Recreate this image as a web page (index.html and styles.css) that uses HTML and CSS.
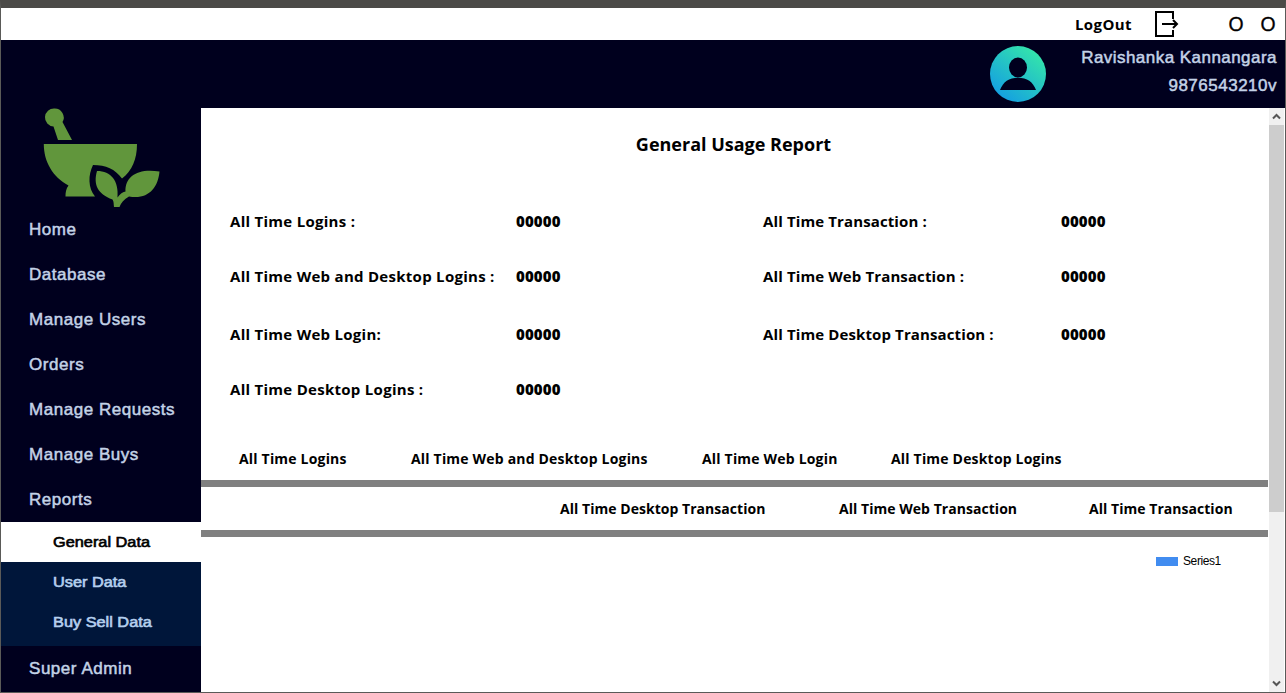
FILE: index.html
```html
<!DOCTYPE html>
<html lang="en">
<head>
<meta charset="utf-8">
<title>General Usage Report</title>
<link rel="stylesheet" href="styles.css">
</head>
<body>
<div class="window">
  <div class="titlebar">
    <span class="logout">LogOut</span>
    <svg class="logout-icon" width="26" height="28" viewBox="0 0 26 28" fill="none" stroke="#000" stroke-width="2"><path d="M19 9V2H2v24h17v-6"/><path d="M8 14h15M19 10l4 4-4 4"/></svg>
    <span class="win-btn">O</span>
    <span class="win-btn">O</span>
  </div>
  <header class="header">
    <svg class="avatar" width="56" height="56" viewBox="0 0 56 56"><defs><linearGradient id="g" x1="0.15" y1="0.9" x2="0.8" y2="0.1"><stop offset="0" stop-color="#149fe2"/><stop offset="1" stop-color="#33e3ac"/></linearGradient></defs><circle cx="28" cy="28" r="28" fill="url(#g)"/><ellipse cx="28" cy="21.5" rx="9" ry="10" fill="#00001e"/><path d="M10 44C13 36 19 31.800 28 31.800S43 36 46 44Z" fill="#00001e"/></svg>
    <div class="user"><span class="user-name">Ravishanka Kannangara</span><span class="user-id">9876543210v</span></div>
  </header>
  <div class="main">
    <nav class="sidebar">
      <svg class="logo" width="118" height="100" viewBox="0 0 118 100" fill="#61963c"><path d="M11.500 0.500a9 9 0 0 1 8 13.500L29 32H15L10.500 18.500A9 9 0 0 1 11.500 0.500Z"/><path d="M0.800 36H94C94 51 89 63 79 70.500C72 61 63 57 50 57C45 67 45 80 52 88.500H22.500C22.500 84 23 81 25.500 77.500C10 69 0.800 54 0.800 36Z"/><path d="M54 63C68 63 76 73 74.500 89.500C77 86 79 84.500 82.500 83.500C82 68 95 60 116.500 63.500C115 80 105 92 86 88.500C81 91 78 95 76.500 99H71C70.500 96 71 94 69.500 91.500C55 86 50 77 54 63Z"/></svg>
      <a class="item">Home</a>
      <a class="item">Database</a>
      <a class="item">Manage Users</a>
      <a class="item">Orders</a>
      <a class="item">Manage Requests</a>
      <a class="item">Manage Buys</a>
      <a class="item">Reports</a>
      <div class="submenu">
        <a class="sub active"><span>General Data</span></a>
        <a class="sub"><span>User Data</span></a>
        <a class="sub"><span>Buy Sell Data</span></a>
      </div>
      <a class="item">Super Admin</a>
    </nav>
    <main class="report">
      <h1>General Usage Report</h1>
      <div class="stats">
        <span class="login-label">All Time Logins :</span><b>00000</b><span>All Time Transaction :</span><b>00000</b>
        <span class="login-label">All Time Web and Desktop Logins :</span><b>00000</b><span>All Time Web Transaction :</span><b>00000</b>
        <span class="login-label">All Time Web Login:</span><b>00000</b><span>All Time Desktop Transaction :</span><b>00000</b>
        <span class="login-label">All Time Desktop Logins :</span><b>00000</b>
      </div>
      <div class="tabs tabs-logins"><span>All Time Logins</span><span>All Time Web and Desktop Logins</span><span>All Time Web Login</span><span>All Time Desktop Logins</span></div>
      <div class="tabs tabs-trans"><span>All Time Desktop Transaction</span><span>All Time Web Transaction</span><span>All Time Transaction</span></div>
      <div class="legend"><i class="swatch"></i><span>Series1</span></div>
    </main>
    <div class="scrollbar">
      <svg width="15" height="17" viewBox="0 0 15 17" fill="none" stroke="#555" stroke-width="2"><path d="M4 10.500l3.500-3.500 3.500 3.500"/></svg>
      <div class="thumb"></div>
      <svg class="down" width="15" height="17" viewBox="0 0 15 17" fill="none" stroke="#555" stroke-width="2"><path d="M4 6.500l3.500 3.500 3.500-3.500"/></svg>
    </div>
  </div>
</div>
</body>
</html>
```

FILE: styles.css
```css
* { box-sizing: border-box; }
body { margin: 0; font-family: "Open Sans", "Noto Sans", sans-serif; color: #000; }
.window { width: 1286px; height: 693px; border: 1px solid #5a5a58; border-top: 8px solid #4b4a47; background: #fff; display: flex; flex-direction: column; overflow: hidden; white-space: nowrap; }
.titlebar { height: 32px; flex: none; display: flex; align-items: center; justify-content: flex-end; padding-right: 9px; font-size: 15px; font-weight: 700; }
.logout { width: 57px; letter-spacing: .4px; }
.logout-icon { margin: 0 48px 0 22px; }
.win-btn { width: 16px; font-size: 20px; font-weight: 400; text-align: center; line-height: 32px; -webkit-text-stroke: .4px #000; }
.win-btn + .win-btn { margin-left: 16px; }
.header { height: 68px; flex: none; background: #00001e; display: flex; justify-content: flex-end; padding: 6px 8px 0 0; font-family: "Liberation Sans", Arial, sans-serif; color: #c3d2e6; }
.user { width: 196px; margin-left: 35px; display: flex; flex-direction: column; align-items: flex-end; font-size: 17px; line-height: 28px; margin-top: -2px; -webkit-text-stroke: .5px #c3d2e6; }
.user-name { letter-spacing: .46px; }
.user-id { letter-spacing: .5px; }
.main { flex: 1; display: flex; min-height: 0; }
.sidebar { width: 200px; background: #00001e; color: #c3d2e6; font-family: "Liberation Sans", Arial, sans-serif; display: flex; flex-direction: column; }
.logo { flex: none; margin: 0 0 -1px 42px; }
.item { height: 45px; flex: none; line-height: 45px; padding-left: 28px; font-size: 17px; letter-spacing: .54px; -webkit-text-stroke: .5px #c3d2e6; }
.submenu { flex: none; height: 124px; background: #00163a; }
.sub { display: block; height: 40px; line-height: 40px; padding-left: 52px; font-size: 14px; color: #b4cfee; -webkit-text-stroke: .6px currentColor; }
.sub span { display: inline-block; transform: scaleX(1.165); transform-origin: left; }
.active { background: #fff; color: #000; }
.report { width: 1067px; }
h1 { margin: 21px 2px 0 0; height: 30px; line-height: 30px; font-size: 18px; text-align: center; }
.stats { margin: 35px 0 0 29px; display: grid; grid-template-columns: 286px 247px 298px 100px; grid-template-rows: 55px 58px 55px 78px; line-height: 54px; font-size: 15px; font-weight: 700; letter-spacing: .12px; }
.login-label { letter-spacing: .28px; }
.tabs { height: 50px; border-bottom: 7px solid #808080; display: flex; font-size: 14px; font-weight: 700; line-height: 43px; }
.tabs-logins { margin-top: -3px; padding-left: 38px; letter-spacing: .19px; }
.tabs-logins span:nth-child(1) { width: 172px; }
.tabs-logins span:nth-child(2) { width: 291px; }
.tabs-logins span:nth-child(3) { width: 189px; }
.tabs-trans { padding-left: 359px; letter-spacing: .04px; }
.tabs-trans span:nth-child(1) { width: 279px; }
.tabs-trans span:nth-child(2) { width: 250px; }
.legend { display: flex; align-items: center; margin: 14px 0 0 955px; height: 20px; font: 12px "Liberation Sans", Arial, sans-serif; letter-spacing: -.4px; }
.swatch { width: 22px; height: 9px; background: #418cf0; margin-right: 5px; }
.scrollbar { width: 15px; margin-left: 1px; background: #f0f0f0; display: flex; flex-direction: column; }
.thumb { height: 387px; background: #cdcdcd; }
.down { margin-top: auto; }
```
